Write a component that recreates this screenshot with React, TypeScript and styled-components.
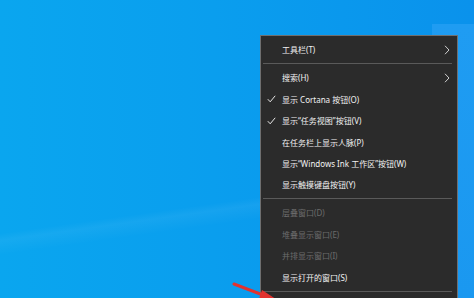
import styled, { createGlobalStyle } from "styled-components"

const GlobalStyle = createGlobalStyle`
  html, body {
    margin: 0;
    padding: 0;
    overflow: hidden;
  }
`

const Desktop = styled.div`
  position: relative;
  width: 474px;
  height: 298px;
  overflow: hidden;
  box-sizing: border-box;
  padding: 35px 0 0 260px;
  background:
    linear-gradient(#1f9cf2, #1a98f0) 432px 24px / 42px 274px no-repeat,
    linear-gradient(172deg, transparent 64%, rgba(255, 255, 255, 0.05) 66%, transparent 70%),
    linear-gradient(90deg, #0aa6ef 0%, #0a9eee 45%, #0a92ec 100%);
`

const Menu = styled.div`
  width: 198px;
  box-sizing: border-box;
  padding-top: 3.3px;
  background: #2b2b2b;
  border: 1px solid #6f6f6f;
  border-bottom: none;
  font-family: "Noto Sans", "Noto Sans CJK SC", sans-serif;
  font-size: 8px;
`

const Item = styled.div<{ $disabled?: boolean }>`
  display: grid;
  grid-template-columns: 21px 1fr 20px;
  align-items: center;
  height: 21.4px;
  color: ${(p) => (p.$disabled ? "#6b6b6b" : "#f2f2f2")};
  white-space: nowrap;
`

const Slot = styled.span`
  display: flex;
  align-items: center;
  justify-content: center;
`

const Separator = styled.div`
  display: flex;
  align-items: center;
  height: 6.6px;
  padding: 0 5px 0 2px;

  &::after {
    content: "";
    flex: 1;
    height: 1px;
    background: #5a5a5a;
  }
`

const Arrow = styled.svg`
  position: absolute;
  left: 228px;
  top: 278px;
`

function Check() {
  return (
    <svg width="9" height="8" viewBox="0 0 9 8">
      <path d="M0.8 4.2 L3.2 6.8 L8.2 0.8" fill="none" stroke="#e8e8e8" strokeWidth="1" />
    </svg>
  )
}

function Chevron() {
  return (
    <svg width="6" height="10" viewBox="0 0 6 10">
      <path d="M1 0.8 L5 5 L1 9.2" fill="none" stroke="#cfcfcf" strokeWidth="1" />
    </svg>
  )
}

type Entry =
  | { sep: true }
  | { label: string; checked?: boolean; sub?: boolean; disabled?: boolean }

const entries: Entry[] = [
  { label: "工具栏(T)", sub: true },
  { sep: true },
  { label: "搜索(H)", sub: true },
  { label: "显示 Cortana 按钮(O)", checked: true },
  { label: "显示“任务视图”按钮(V)", checked: true },
  { label: "在任务栏上显示人脉(P)" },
  { label: "显示“Windows Ink 工作区”按钮(W)" },
  { label: "显示触摸键盘按钮(Y)" },
  { sep: true },
  { label: "层叠窗口(D)", disabled: true },
  { label: "堆叠显示窗口(E)", disabled: true },
  { label: "并排显示窗口(I)", disabled: true },
  { label: "显示打开的窗口(S)" },
  { sep: true },
  { label: "任务管理器(K)" },
]

export default function App() {
  return (
    <>
      <GlobalStyle />
      <Desktop>
        <Menu>
          {entries.map((e, i) =>
            "sep" in e ? (
              <Separator key={i} />
            ) : (
              <Item key={i} $disabled={e.disabled}>
                <Slot>{e.checked && <Check />}</Slot>
                <span>{e.label}</span>
                <Slot>{e.sub && <Chevron />}</Slot>
              </Item>
            )
          )}
        </Menu>
        <Arrow width="60" height="30" viewBox="0 0 60 30">
          <path d="M6 6 L40 19" stroke="#e2322f" strokeWidth="3" strokeLinecap="round" />
          <path d="M34 12 L54 25 L30 24 Z" fill="#e2322f" />
        </Arrow>
      </Desktop>
    </>
  )
}
